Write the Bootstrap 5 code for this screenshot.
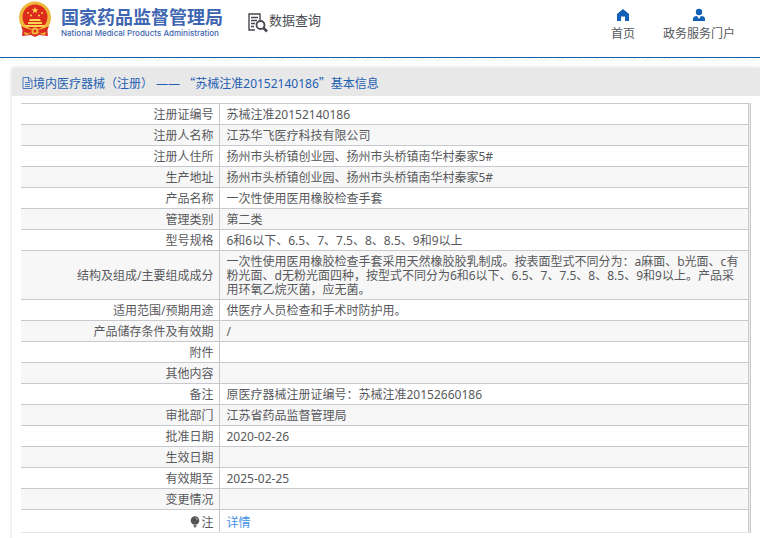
<!DOCTYPE html>
<html lang="zh-CN">
<head>
<meta charset="utf-8">
<meta name="viewport" content="width=device-width, initial-scale=1">
<title>国家药品监督管理局 数据查询</title>
<link href="https://cdn.jsdelivr.net/npm/bootstrap@5.3.0/dist/css/bootstrap.min.css" rel="stylesheet">
<style>
body{font:12px/14px "Noto Sans","Noto Sans CJK SC",sans-serif;color:#58595c;background:#fff;overflow-x:hidden}
.site-head{height:58px;border-bottom:1px solid #175fa8}
.brand{color:#3f66b1;margin-left:18px}
.brand-text{padding:4px 0 0 1px}
.brand-cn{font:bold 18px/24px "Noto Sans CJK SC",sans-serif}
.brand-en{font:500 8px/11px Inter,"Noto Sans",sans-serif;white-space:nowrap}
.search-title{font-size:13px;line-height:16px;color:#4a4b50;margin:12px 0 0 25px}
.top-nav{gap:28px;padding-right:25px}
.top-nav a{color:#58595c;line-height:16px;padding-top:8px}
.hatch{height:4px;background:repeating-linear-gradient(135deg,#fff 0 2px,#f3f5ef 2px 3px)}
.panel{margin:6px 0 0 12px;padding-bottom:8px;box-shadow:0 0 4px #d8d8d8}
.panel-title{font-size:12px;line-height:25px;padding:2px 0 0 10px;background:#e8e8e8;color:#2360b3}
.quote{font-family:"Noto Sans CJK SC",sans-serif}
.frame{margin:7px 9px 0 9px;padding-right:1px;border-right:1px solid #c8c9cd;background:#eee}
.detail{border-collapse:collapse;color:inherit;background:#fff;border-right:1px solid #c8c9cd}
.detail th,.detail td{border:0 solid #c8c9cd;border-top-width:1px;padding:4px 5px 2px 7px;height:21px;font-weight:400;vertical-align:middle}
.detail th{width:198px;text-align:right;border-right-width:1px}
.detail tr:nth-child(even){background:#f7f7f7}
.detail tr:last-child>*{height:23px;padding-top:5px;border-bottom:1px solid #e6e6e8}
.detail svg{vertical-align:-1px}
.detail a{color:#3f90e8}
</style>
<script src="https://cdn.jsdelivr.net/npm/bootstrap@5.3.0/dist/js/bootstrap.bundle.min.js"></script>
</head>
<body>
<header class="site-head d-flex align-items-start">
  <div class="brand d-flex align-items-start gap-2">
    <svg class="flex-shrink-0" width="34" height="38" viewBox="0 -2 34 38" aria-hidden="true">
      <path d="M5 25l-1 9 9-1 4 2 4-2 9 1-1-9z" fill="#db2b20"/>
      <circle cx="17" cy="15.500" r="16" fill="#efb63c"/>
      <circle cx="17" cy="15" r="12.500" fill="#dc2a1d"/>
      <path d="M17 5l1 2.300h2.500l-2 1.500.8 2.400-2.300-1.400-2.300 1.400.8-2.400-2-1.500H16z" fill="#ffd44e"/>
      <g fill="#ffd44e"><circle cx="10" cy="11" r="1"/><circle cx="13" cy="13.500" r="1"/><circle cx="21" cy="13.500" r="1"/><circle cx="24" cy="11" r="1"/>
      <path d="M12 17h10l1 2H11zM10 20h14v2H10zM7 23h20v2H7z"/></g>
      <path d="M3 24q7 4 14 4t14-4l-2 5q-5 2-12 2T5 29z" fill="#dc2a1d"/>
      <circle cx="17" cy="29" r="3.500" fill="#efb63c"/><circle cx="17" cy="29" r="1.500" fill="#dc2a1d"/>
      <path d="M6 30l7 2-6 1zM28 30l-7 2 6 1z" fill="#efb63c"/>
    </svg>
    <div class="brand-text">
      <div class="brand-cn">国家药品监督管理局</div>
      <div class="brand-en">National Medical Products Administration</div>
    </div>
  </div>
  <div class="search-title d-flex text-nowrap">
    <svg width="21" height="21" viewBox="0 0 21 21" fill="none" stroke="#48484e" aria-hidden="true">
      <path d="M7 18H1V2h11v6M3 5.500h7M3 8.500h6M3 11.500h4M3 14.500h3" stroke-width="1.400"/>
      <circle cx="12.500" cy="13" r="4" stroke-width="1.800"/><path d="M15.500 16l3.500 3.500" stroke-width="2.600"/>
    </svg><span>数据查询</span>
  </div>
  <nav class="top-nav d-flex ms-auto">
    <a href="#" class="d-flex flex-column align-items-center text-decoration-none">
      <svg class="mb-1" width="14" height="14" viewBox="0 0 14 14" aria-hidden="true"><path d="M7 1l6 5v7H9V8.500H5V13H1V6z" fill="#1260b8"/></svg>首页</a>
    <a href="#" class="d-flex flex-column align-items-center text-decoration-none">
      <svg class="mb-1" width="14" height="14" viewBox="0 0 14 14" aria-hidden="true"><circle cx="7" cy="4" r="3.200" fill="#1260b8"/><path d="M1 13v-2q0-3 4-3l2 3 2-3q4 0 4 3v2z" fill="#1260b8"/></svg>政务服务门户</a>
  </nav>
</header>
<div class="hatch"></div>
<main class="panel">
  <h1 class="panel-title d-flex align-items-center mb-0 fw-normal">
    <svg width="11" height="12" viewBox="0 0 11 12" fill="none" stroke="#2360b3" aria-hidden="true"><path d="M1 .5h6l3 3v8H1zM6.500.5V4H10M3 5.500h5M3 7.500h5M3 9.500h5" stroke-width=".8"/></svg>
    <span>境内医疗器械（注册） —— <span class="quote">“</span>苏械注准20152140186<span class="quote">”</span>基本信息</span>
  </h1>
  <div class="frame">
    <table class="detail w-100">
      <tbody>
      <tr><th scope="row">注册证编号</th><td>苏械注准20152140186</td></tr>
      <tr><th scope="row">注册人名称</th><td>江苏华飞医疗科技有限公司</td></tr>
      <tr><th scope="row">注册人住所</th><td>扬州市头桥镇创业园、扬州市头桥镇南华村秦家5#</td></tr>
      <tr><th scope="row">生产地址</th><td>扬州市头桥镇创业园、扬州市头桥镇南华村秦家5#</td></tr>
      <tr><th scope="row">产品名称</th><td>一次性使用医用橡胶检查手套</td></tr>
      <tr><th scope="row">管理类别</th><td>第二类</td></tr>
      <tr><th scope="row">型号规格</th><td>6和6以下、6.5、7、7.5、8、8.5、9和9以上</td></tr>
      <tr><th scope="row">结构及组成/主要组成成分</th><td>一次性使用医用橡胶检查手套采用天然橡胶胶乳制成。按表面型式不同分为：a麻面、b光面、c有粉光面、d无粉光面四种，按型式不同分为6和6以下、6.5、7、7.5、8、8.5、9和9以上。产品采用环氧乙烷灭菌，应无菌。</td></tr>
      <tr><th scope="row">适用范围/预期用途</th><td>供医疗人员检查和手术时防护用。</td></tr>
      <tr><th scope="row">产品储存条件及有效期</th><td>/</td></tr>
      <tr><th scope="row">附件</th><td></td></tr>
      <tr><th scope="row">其他内容</th><td></td></tr>
      <tr><th scope="row">备注</th><td>原医疗器械注册证编号：苏械注准20152660186</td></tr>
      <tr><th scope="row">审批部门</th><td>江苏省药品监督管理局</td></tr>
      <tr><th scope="row">批准日期</th><td>2020-02-26</td></tr>
      <tr><th scope="row">生效日期</th><td></td></tr>
      <tr><th scope="row">有效期至</th><td>2025-02-25</td></tr>
      <tr><th scope="row">变更情况</th><td></td></tr>
      <tr><th scope="row"><svg width="12" height="12" viewBox="-1 0 12 12" aria-hidden="true"><circle cx="5" cy="4.500" r="4.300" fill="#555"/><path d="M3.500 9h3v1.500L5 12l-1.500-1.500z" fill="#777"/><path d="M5.500 2q2 .3 2 2" fill="none" stroke="#ccc" stroke-width=".8"/></svg>注</th><td><a href="#" class="text-decoration-none">详情</a></td></tr>
      </tbody>
    </table>
  </div>
</main>
</body>
</html>
